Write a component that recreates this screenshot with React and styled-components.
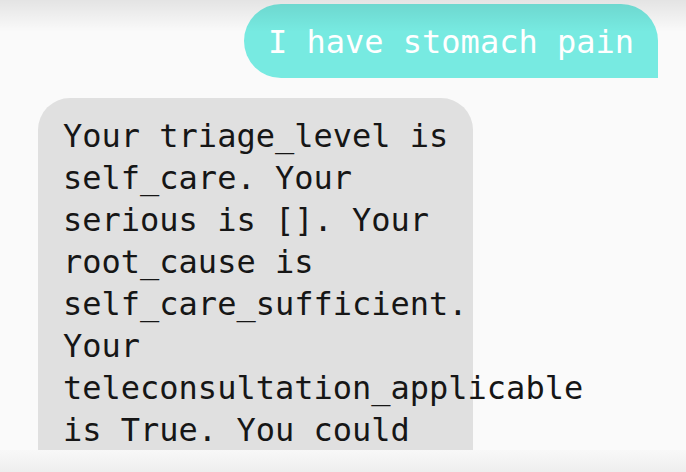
import React from 'react';
import styled, { createGlobalStyle } from 'styled-components';

const GlobalStyle = createGlobalStyle`
  html, body {
    margin: 0;
    padding: 0;
    background: #fafafa;
  }
`;

const Page = styled.div`
  position: relative;
  width: 686px;
  height: 472px;
  display: flex;
  flex-direction: column;
  background: #fafafa;
  overflow: hidden;
  font-family: "DejaVu Sans Mono", "Liberation Mono", monospace;
`;

// shadow from the app bar above, lies over the messages
const TopShade = styled.div`
  position: absolute;
  top: 0;
  left: 0;
  right: 0;
  height: 32px;
  background: linear-gradient(rgba(0, 0, 0, 0.09), rgba(0, 0, 0, 0));
  pointer-events: none;
`;

const MessageList = styled.div`
  flex: 1;
  min-height: 0;
  overflow: hidden;
  display: flex;
  flex-direction: column;
  gap: 20px;
  padding: 4px 28px 0 38px;
`;

const Bubble = styled.div`
  align-self: ${props => (props.mine ? 'flex-end' : 'flex-start')};
  max-width: ${props => (props.mine ? '440px' : '386px')};
  padding: ${props => (props.mine ? '17px 24px 15px' : '17px 24px 15px 25px')};
  font-size: 32px;
  line-height: 42px;
  white-space: pre-wrap;
  color: ${props => (props.mine ? '#ffffff' : '#161616')};
  background: ${props => (props.mine ? '#77eae1' : '#e0e0e0')};
  border-radius: ${props => (props.mine ? '37px 37px 0 37px' : '32px 32px 32px 0')};
`;

const Footer = styled.div`
  height: 22px;
  flex-shrink: 0;
  background: linear-gradient(#f8f8f8, #eeeeee);
`;

const messages = [
  { mine: true, text: 'I have stomach pain' },
  {
    mine: false,
    text:
      'Your triage_level is self_care. Your serious is []. Your root_cause is self_care_sufficient. Your teleconsultation_applicable is True. You could consider visiting a pharmacy.'
  }
];

export default function App() {
  return (
    <Page>
      <GlobalStyle />
      <MessageList>
        {messages.map((m, i) => (
          <Bubble key={i} mine={m.mine}>{m.text}</Bubble>
        ))}
      </MessageList>
      <Footer />
      <TopShade />
    </Page>
  );
}
